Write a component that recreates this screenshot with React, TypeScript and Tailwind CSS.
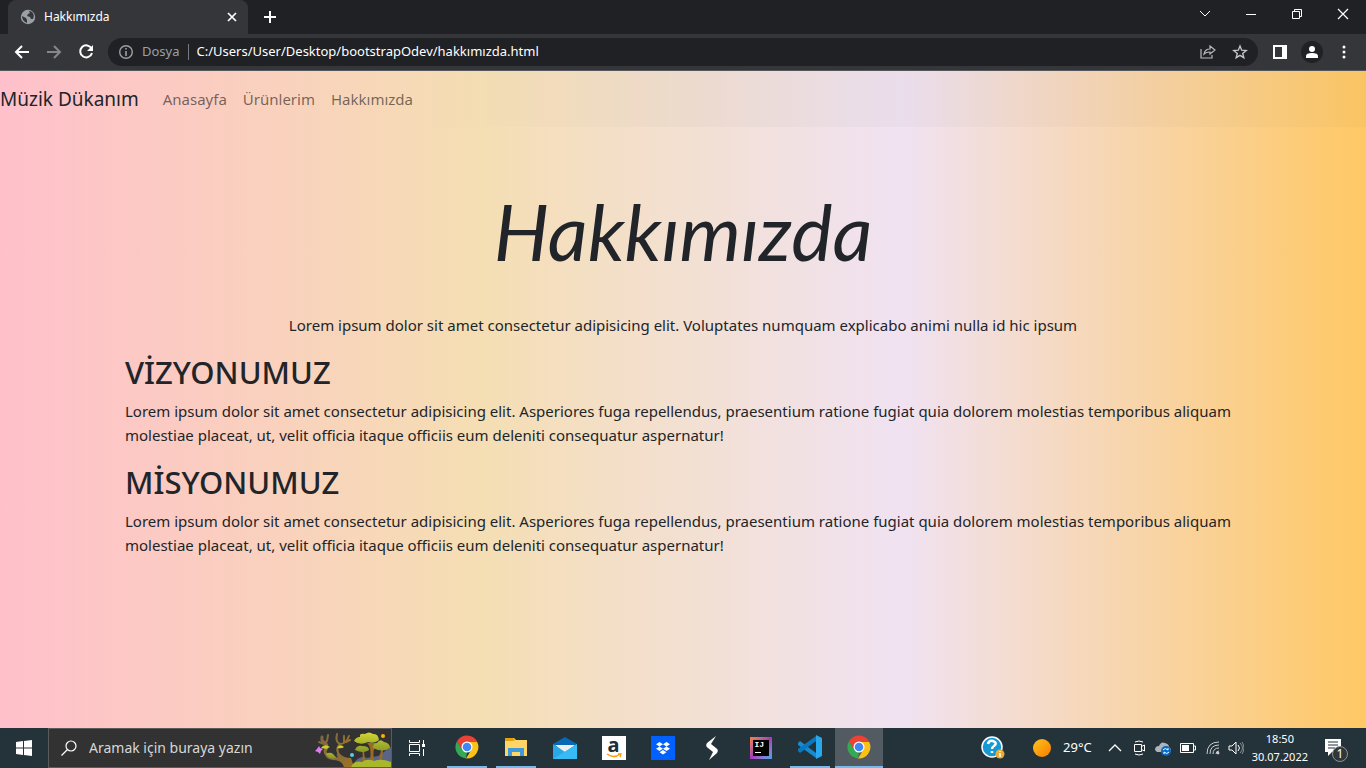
import React from "react";

function Chrome() {
  return (
    <svg viewBox="0 0 24 24" className="size-6" aria-hidden="true">
      <path d="M2 6.2A11.5 11.5 0 0 1 22 6.3L22 7H12L7 14.8Z" fill="#ea4335" />
      <path d="M2 6.2 7.2 15 12 17 11 23.5A11.5 11.5 0 0 1 2 6.2Z" fill="#34a853" />
      <path d="M12 7H22.2A11.5 11.5 0 0 1 11 23.5L16.5 14.5Z" fill="#fbc116" />
      <circle cx="12" cy="12" r="5.5" fill="white" />
      <circle cx="12" cy="12" r="4.3" fill="#4285f4" />
    </svg>
  );
}

function Forest() {
  return (
    <svg viewBox="0 0 76 38" className="h-[38px] w-[76px] shrink-0" aria-hidden="true">
      <defs>
        <linearGradient id="leaf" x1="0" y1="0" x2="0" y2="1"><stop stopColor="#d3d52f" /><stop offset="1" stopColor="#84982a" /></linearGradient>
        <linearGradient id="bark" x1="0" y1="0" x2="1" y2="1"><stop stopColor="#7c6747" /><stop offset="1" stopColor="#a17420" /></linearGradient>
      </defs>
      <path d="M37 38Q43 25 52 29L63 27 76 18V38Z" fill="#596487" />
      <g fill="none" stroke="url(#bark)" strokeLinecap="round">
        <path d="M7 8Q6 12 10 14Q14 17 10 22Q10 27 20 29" strokeWidth="3" />
        <path d="M13 6 12 12 10 14M4 13 9 15M22 5Q20 13 25 15Q31 15 34 7M29 13V7M35 11 31 13M25 15Q19 21 26 28" strokeWidth="2" />
      </g>
      <path d="M10 25Q15 31 23 28Q20 25 24 24Q28 29 36 29L39 38H29Q27 31 18 31Q10 30 10 25Z" fill="url(#bark)" />
      <path d="M11 25Q17 21 21 29Q14 31 11 25M6 19Q9 14 15 18L11 20ZM22 19Q25 14 29 18Q27 20 22 19" fill="url(#leaf)" />
      <path d="M52 14Q57 18 55 32H59Q57 20 62 14M46 21Q49 24 47 32H50L49 21M66 21 64 32H67L68 20" fill="#9b6b25" />
      <path d="M39 12Q41 8 45 8Q44 4 50 5Q54 2 58 5Q63 4 64 11Q60 15 53 13Q45 17 39 12M40 21Q42 16 47 17Q54 17 54 21Q48 25 40 21M58 19Q58 14 62 14Q65 9 69 13Q75 14 75 19Q68 24 58 19" fill="url(#leaf)" />
      <path d="M36 38Q39 31 47 33Q52 29 59 32Q66 29 76 33V38Z" fill="#a9b82a" />
      <path d="M4 17 5 19 8 20 6 22 5 25 3 23 0 22 2 20Z" fill="#dc7df1" />
      <circle cx="37" cy="26" r="2" fill="#55cee9" /><circle cx="68" cy="7" r="2" fill="#ffb000" />
    </svg>
  );
}

function BrowserChrome() {
  return (
    <header className="bg-[#35363a] text-white">
      <div className="flex h-[34px] items-stretch bg-[#202124]">
        <div className="ml-2 flex w-60 items-center rounded-t-lg bg-[#35363a] pr-2 pl-3">
          <svg viewBox="0 0 16 16" className="size-4" aria-hidden="true">
            <circle cx="8" cy="8" r="7.2" fill="#9aa0a6" />
            <path d="M2 7 6 9 7 11 7 14Q2 12 2 7M7 2 9 2 10 4 8 5 7 7 10 8 11 10 13 10Q15 6 12 3L10 2Z" fill="#35363a" />
          </svg>
          <span className="ml-2 flex-1 text-xs">Hakkımızda</span>
          <button aria-label="Sekmeyi kapat"><svg viewBox="0 0 16 16" className="size-4" aria-hidden="true"><path d="m4 4 8 8m0-8-8 8" stroke="white" strokeWidth="1.7" /></svg></button>
        </div>
        <button aria-label="Yeni sekme" className="ml-3"><svg viewBox="0 0 20 20" className="size-5" aria-hidden="true"><path d="M10 4v12M4 10h12" stroke="white" strokeWidth="2" /></svg></button>
        <div className="ml-auto flex items-start">
          <button aria-label="Sekme ara" className="flex h-7 w-[46px] items-center justify-center"><svg viewBox="0 0 12 12" className="size-3" fill="none" aria-hidden="true"><path d="m1 3 5 5 5-5" stroke="white" /></svg></button>
          <button aria-label="Küçült" className="flex h-7 w-[46px] items-center justify-center"><svg viewBox="0 0 12 12" className="size-3" aria-hidden="true"><path d="M1 6.5h10" stroke="white" /></svg></button>
          <button aria-label="Önceki boyut" className="flex h-7 w-[46px] items-center justify-center"><svg viewBox="0 0 12 12" className="size-3" fill="none" aria-hidden="true"><path d="M1.5 3.5h7v7h-7zM3.5 3V1.5h7v7H9" stroke="white" /></svg></button>
          <button aria-label="Kapat" className="flex h-7 w-[46px] items-center justify-center"><svg viewBox="0 0 12 12" className="size-3" aria-hidden="true"><path d="m1 1 10 10m0-10L1 11" stroke="white" strokeWidth="1.2" /></svg></button>
        </div>
      </div>
      <div className="flex h-[37px] items-center border-b border-[#55565a]">
        <div className="flex w-[108px] shrink-0 items-center gap-3 pl-3">
          <button aria-label="Geri"><svg viewBox="0 0 20 20" className="size-5" fill="none" aria-hidden="true"><path d="M17 10H4m6-6-6 6 6 6" stroke="white" strokeWidth="2" /></svg></button>
          <button aria-label="İleri"><svg viewBox="0 0 20 20" className="size-5" fill="none" aria-hidden="true"><path d="M3 10h13m-6-6 6 6-6 6" stroke="#85878b" strokeWidth="2" /></svg></button>
          <button aria-label="Yenile"><svg viewBox="0 0 20 20" className="size-5" fill="none" aria-hidden="true"><path d="M15.5 6.5A6 6 0 1 0 16 11" stroke="white" strokeWidth="2" /><path d="M17 3v6h-6Z" fill="white" /></svg></button>
        </div>
        <div className="flex h-7 min-w-0 flex-1 items-center rounded-full bg-[#202124] px-2.5">
          <svg viewBox="0 0 16 16" className="size-4 shrink-0" fill="none" stroke="#9aa0a6" aria-hidden="true"><circle cx="8" cy="8" r="6.3" strokeWidth="1.4" /><path d="M8 7v5M8 4v1.5" strokeWidth="1.6" /></svg>
          <label htmlFor="address" className="ml-2 text-[13px] text-[#9aa0a6]">Dosya</label>
          <span className="mx-2 h-4 w-px bg-[#777a7e]" />
          <input id="address" className="min-w-0 flex-1 bg-transparent text-[13px] text-white outline-none" defaultValue="C:/Users/User/Desktop/bootstrapOdev/hakkımızda.html" />
          <button aria-label="Paylaş"><svg viewBox="0 0 16 16" className="size-4" fill="none" stroke="#b7b9bd" aria-hidden="true"><path d="M1 5v9h11v-3M10 2l5 4-5 4V8Q6 8 4 10Q5 5 10 5Z" strokeWidth="1.2" /></svg></button>
          <button aria-label="Yer işareti" className="ml-4"><svg viewBox="0 0 16 16" className="size-4" fill="none" aria-hidden="true"><path d="m8 2 1.7 4.2 4.5.3-3.5 2.9 1.1 4.3L8 11.3l-3.8 2.4 1.1-4.3-3.5-2.9 4.5-.3Z" stroke="#c2c4c7" strokeWidth="1.4" /></svg></button>
        </div>
        <div className="flex w-[108px] shrink-0 items-center justify-end pr-3.5">
          <button aria-label="Yan panel"><svg viewBox="0 0 16 16" className="size-4" aria-hidden="true"><path d="M1 1h14v14H1Zm2 2v10h7V3Z" fill="white" fillRule="evenodd" /></svg></button>
          <button aria-label="Profil" className="ml-3"><svg viewBox="0 0 24 24" className="size-6" aria-hidden="true"><circle cx="12" cy="12" r="11" fill="#202124" /><circle cx="12" cy="9" r="3" fill="white" /><path d="M6 18v-2q0-3 6-3t6 3v2Z" fill="white" /></svg></button>
          <button aria-label="Menü" className="ml-3"><svg viewBox="0 0 16 16" className="size-4" fill="white" aria-hidden="true"><circle cx="8" cy="3" r="1.5" /><circle cx="8" cy="8" r="1.5" /><circle cx="8" cy="13" r="1.5" /></svg></button>
        </div>
      </div>
    </header>
  );
}

const vision = "Lorem ipsum dolor sit amet consectetur adipisicing elit. Asperiores fuga repellendus, praesentium ratione fugiat quia dolorem molestias temporibus aliquam molestiae placeat, ut, velit officia itaque officiis eum deleniti consequatur aspernatur!";

function Page() {
  return (
    <div className="flex-1 bg-[linear-gradient(to_right,#ffc0cb_0%,#f5deb3_35%,#f0e2f2_66%,#ffc864_100%)] text-[15px] text-[#212529]">
      <nav className="flex h-14 items-center bg-linear-to-r from-transparent from-30% via-black/[0.025] via-50% to-black/[0.02]">
        <a href="#" className="mr-4 text-[19px]">Müzik Dükanım</a>
        <div className="flex text-black/55">
          <a href="#" className="p-2">Anasayfa</a><a href="#" className="p-2">Ürünlerim</a><a href="#" className="p-2">Hakkımızda</a>
        </div>
      </nav>
      <main className="mx-auto max-w-[1140px] px-3">
        <h1 className="pt-11 text-center font-['Lato'] text-[78px] leading-[120px] font-normal italic">Hakkımızda</h1>
        <p className="mt-[22px] text-center leading-6">Lorem ipsum dolor sit amet consectetur adipisicing elit. Voluptates numquam explicabo animi nulla id hic ipsum</p>
        <h2 className="mt-4 mb-2 text-[31px] leading-[38px] font-medium">VİZYONUMUZ</h2>
        <p className="mb-4 leading-6">{vision}</p>
        <h2 className="mb-2 text-[31px] leading-[38px] font-medium">MİSYONUMUZ</h2>
        <p className="leading-6">{vision}</p>
      </main>
    </div>
  );
}

const slot = "flex h-10 w-[49px] shrink-0 items-center justify-center";

function Taskbar() {
  return (
    <footer className="flex h-10 items-center bg-[#24333a] text-white">
      <button aria-label="Başlat" className="flex h-10 w-12 shrink-0 items-center justify-center"><svg viewBox="0 0 16 16" className="size-4" fill="white" aria-hidden="true"><path d="m0 2 7-1v6.5H0ZM8 1l8-1v7.5H8ZM0 8.5h7V15l-7-1ZM8 8.5h8V16l-8-1Z" /></svg></button>
      <div className="flex h-10 w-[344px] shrink-0 items-center border border-[#5b5b5b] bg-[#323232] pl-3">
        <svg viewBox="0 0 16 16" className="size-4" fill="none" stroke="white" aria-hidden="true"><circle cx="10" cy="6" r="5" strokeWidth="1.2" /><path d="m6.5 9.5-6 6" strokeWidth="1.2" /></svg>
        <input aria-label="Arama" placeholder="Aramak için buraya yazın" className="ml-3 min-w-0 flex-1 text-sm outline-none placeholder:text-[#d7d7d7]" />
        <Forest />
      </div>
      <button aria-label="Görev görünümü" className={slot}><svg viewBox="0 0 18 18" className="size-[18px]" fill="none" stroke="white" aria-hidden="true"><path d="M1.5 1v2.5h10V1M1.5 5.5h10v7h-10ZM1.5 17v-2.5h10V17M15.5 1v4m0 5v7" /><path d="M14 5h3v3h-3Z" fill="white" stroke="none" /></svg></button>
      <button aria-label="Google Chrome" className="ml-1.5 flex h-10 w-10 items-center justify-center border-b-2 border-[#76b9ed]"><Chrome /></button>
      <button aria-label="Dosya Gezgini" className="ml-[9px] flex h-10 w-10 items-center justify-center border-b-2 border-[#76b9ed]"><svg viewBox="0 0 24 24" className="size-6" aria-hidden="true"><path d="M1 3h9l2 2h11v16H1Z" fill="#ffd566" /><path d="M1 3h8l2 2-2 1H1Z" fill="#e5a00d" /><path d="M4 21v-8h16v8h-4v-4H8v4Z" fill="#3f9add" /></svg></button>
      <div className="ml-1 flex">
        <button aria-label="Posta" className={slot}><svg viewBox="0 0 24 24" className="size-6" aria-hidden="true"><path d="M0 8 12 1l12 7-12 9Z" fill="#0868b5" /><path d="M2 9h20l-10 8Z" fill="#eee" /><path d="m0 8 12 8 12-8v15H0Z" fill="#28a8e8" /><path d="m0 23 24-15v15Z" fill="#38bbf4" /></svg></button>
        <button aria-label="Amazon" className={slot}><span className="flex size-6 flex-col items-center bg-white"><b className="text-xl leading-[17px] text-[#202d3b]">a</b><svg viewBox="0 0 16 5" className="w-4" fill="none" aria-hidden="true"><path d="M1 1q7 5 13 0m-2 0h3l-1 3" stroke="#ff9900" strokeWidth="1.3" /></svg></span></button>
        <button aria-label="Dropbox" className={slot}><svg viewBox="0 0 24 24" className="size-6" aria-hidden="true"><path d="M0 0h24v24H0Z" fill="#0061ff" /><path d="m8.5 6 3.5 2.2-3.5 2.2L5 8.2ZM15.500 6l3.5 2.200-3.500 2.200L12 8.200ZM8.500 10.600l3.500 2.200-3.500 2.200L5 12.800ZM15.500 10.600l3.500 2.200-3.500 2.200-3.500-2.200ZM12 14l3.500 2.200-3.500 2.200-3.500-2.200Z" fill="white" /></svg></button>
        <button aria-label="Stake" className={slot}><svg viewBox="0 0 24 24" className="size-6" fill="white" aria-hidden="true"><path d="M16 0 7 7Q5 10 8 12l5 4-4 8 8-7q2-3-1-5l-5-4Z" /></svg></button>
        <button aria-label="IntelliJ IDEA" className={slot}><span className="flex size-[22px] items-center justify-center bg-linear-to-br from-[#fc801d] via-[#a638b9] to-[#16a9ed]"><span className="size-4 bg-black pl-0.5 text-left font-['Liberation_Mono'] text-[8px] leading-[10px] font-bold">IJ<span className="mt-0.5 block h-px w-1.5 bg-white" /></span></span></button>
      </div>
      <button aria-label="Visual Studio Code" className="ml-[5px] flex h-10 w-10 items-center justify-center border-b-2 border-[#76b9ed]"><svg viewBox="0 0 24 24" className="size-6" aria-hidden="true"><path d="m0 8 2-2 16 12v5L0 10Z" fill="#168bd2" /><path d="m0 16 2 2L18 6V1L0 14Z" fill="#0878bf" /><path d="m18 0 6 3v18l-6 3Z" fill="#28a8ed" /></svg></button>
      <button aria-label="Google Chrome, etkin pencere" className="ml-[5px] flex h-10 w-12 items-center justify-center border-b-2 border-[#76b9ed] bg-[#535b62]"><Chrome /></button>
      <div className="ml-auto flex h-10 items-center">
        <button aria-label="Yardım" className="mr-7"><svg viewBox="0 0 24 24" className="size-6" aria-hidden="true"><circle cx="11" cy="11" r="10" fill="#1599d5" stroke="white" strokeWidth="1.5" /><path d="M7 8q1-4 5-3 5 2 1 5-2 1-2 3m0 2v2" fill="none" stroke="white" strokeWidth="2.5" /><circle cx="19" cy="18" r="4.5" fill="#e9ac38" /><path d="M19 15v1m0 1v4" stroke="white" strokeWidth="1.5" /></svg></button>
        <button className="mr-4 flex items-center gap-3 text-[13px]"><span className="size-[18px] rounded-full bg-linear-to-br from-[#ffc21c] to-[#f57c00]" />29°C</button>
        <button aria-label="Gizli simgeler" className="mr-2.5"><svg viewBox="0 0 14 14" className="size-3.5" fill="none" aria-hidden="true"><path d="m1 10 6-6 6 6" stroke="white" strokeWidth="1.3" /></svg></button>
        <button aria-label="Toplantı" className="mr-1.5"><svg viewBox="0 0 16 16" className="size-4" fill="none" stroke="white" aria-hidden="true"><path d="M2.500 4.500h7v7h-7Zm7 2 3-1.500v6l-3-1.500M3 2q4-2 8 0M3 14q4 2 8 0" /></svg></button>
        <button aria-label="OneDrive" className="mr-2"><svg viewBox="0 0 18 16" className="h-4 w-[18px]" aria-hidden="true"><path d="M1 10Q1 6 5 6 7 1 11 3 15 4 15 7l2 2v3H3Z" fill="#b1b4b7" /><circle cx="12" cy="11" r="5" fill="#0868c2" /><path d="M9 10q2-3 5 0V8m1 4q-2 3-5 0v2" fill="none" stroke="white" /></svg></button>
        <button aria-label="Pil" className="mr-2.5"><svg viewBox="0 0 16 12" className="h-3 w-4" aria-hidden="true"><path d="M.5 1.500h13v9H.5ZM14 4h1.500v4H14" fill="none" stroke="white" /><path d="M2 3h7v6H2Z" fill="white" /></svg></button>
        <button aria-label="Kablosuz ağ" className="mr-2"><svg viewBox="0 0 14 14" className="size-3.5" fill="none" stroke="#ccc" aria-hidden="true"><path d="M1 13Q1 1 13 1M4 13Q4 4 13 4M7 13Q7 7 13 7M10 13Q10 10 13 10" /><circle cx="12" cy="12" r="1" fill="white" /></svg></button>
        <button aria-label="Ses" className="mr-2"><svg viewBox="0 0 16 16" className="size-4" fill="none" stroke="white" aria-hidden="true"><path d="M1 6h3l4-4v12l-4-4H1ZM10 5q3 3 0 6" /><path d="M12 3q5 5 0 10M14 2q4 6 0 12" stroke="#879095" /></svg></button>
        <div className="mr-4 text-center text-[11px] leading-[18px]"><div>18:50</div><div>30.07.2022</div></div>
        <button aria-label="Bildirimler" className="relative mr-[22px]"><svg viewBox="0 0 20 20" className="size-5" aria-hidden="true"><path d="M1 1h16v13H8l-4 4v-4H1Z" fill="white" /><path d="M4 4h10M4 7h10M4 10h7" stroke="#24333a" /></svg><span className="absolute top-2 left-2 flex size-4 items-center justify-center rounded-full border border-[#8d9193] bg-[#30373a] text-xs">1</span></button>
      </div>
    </footer>
  );
}

export default function App() {
  return <div className="flex min-h-screen flex-col font-['Noto_Sans',sans-serif]"><BrowserChrome /><Page /><Taskbar /></div>;
}
